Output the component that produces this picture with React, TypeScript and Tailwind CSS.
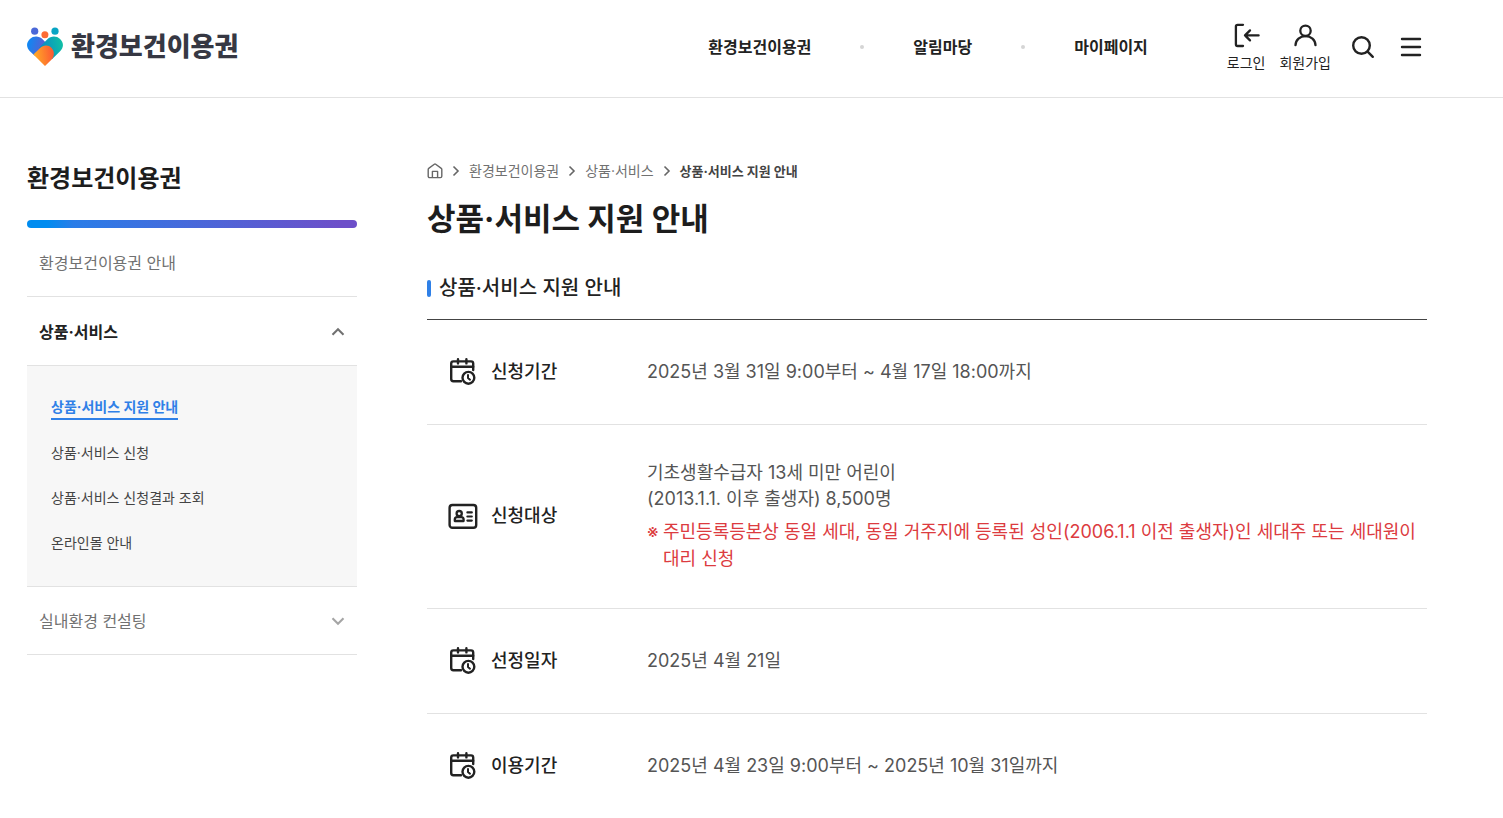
import React, { useState } from "react";

type IconProps = { className?: string };

const Logo: React.FC<IconProps> = ({ className }) => (
  <svg className={className} width="36" height="40" viewBox="0 0 36 40" fill="none" aria-hidden="true">
    <defs>
      <linearGradient id="logo-blue" x1="0" y1="16" x2="17" y2="20" gradientUnits="userSpaceOnUse">
        <stop stopColor="#0a8af5" />
        <stop offset="1" stopColor="#5a5fd2" />
      </linearGradient>
      <linearGradient id="logo-green" x1="16" y1="22" x2="36" y2="18" gradientUnits="userSpaceOnUse">
        <stop stopColor="#0a8fc4" />
        <stop offset="1" stopColor="#10bfa5" />
      </linearGradient>
      <linearGradient id="logo-orange" x1="8" y1="28" x2="26" y2="26" gradientUnits="userSpaceOnUse">
        <stop stopColor="#ffa726" />
        <stop offset="1" stopColor="#fd5a33" />
      </linearGradient>
    </defs>
    <circle cx="7.7" cy="4.2" r="3.6" fill="#4a68d8" />
    <circle cx="28" cy="4.2" r="3.6" fill="#08a5c4" />
    <circle cx="17.9" cy="7.8" r="3.5" fill="#fd6a33" />
    <path d="M18 14.8L15.6 12.3C12 8.7 6.4 8.7 2.9 12C-.9 15.6-.9 20.6 2.9 24.2L7.4 28.6L20 24Z" fill="url(#logo-blue)" />
    <path d="M12 20.8L20.4 12.3C24 8.7 29.6 8.7 33.1 12C36.9 15.6 36.9 20.6 33.1 24.2L25.2 31.9Z" fill="url(#logo-green)" />
    <path d="M6.4 27.6L12.9 21.3C16.3 17.8 21.4 17.8 24.4 20.8C27.4 23.8 27.5 28.2 25.4 31.7L18 39Z" fill="url(#logo-orange)" />
  </svg>
);

const LoginIcon = () => (
  <svg width="28" height="28" viewBox="0 0 28 28" fill="none" stroke="#222" strokeWidth="2.3" strokeLinecap="round" strokeLinejoin="round" aria-hidden="true">
    <path d="M11 3.8H5.6C4.7 3.8 3.9 4.6 3.9 5.5V23.3C3.9 24.2 4.7 25 5.6 25H11" />
    <path d="M26.6 14.4H13M18 9.4L13 14.4L18 19.4" />
  </svg>
);

const UserIcon = () => (
  <svg width="28" height="28" viewBox="0 0 28 28" fill="none" stroke="#222" strokeWidth="2.3" strokeLinecap="round" aria-hidden="true">
    <circle cx="14.5" cy="9.8" r="5.2" />
    <path d="M4.5 24.2C4.7 18.8 9 15.1 14.5 15.1S24.3 18.8 24.5 24.2" />
  </svg>
);

const SearchIcon = () => (
  <svg width="32" height="32" viewBox="0 0 32 32" fill="none" stroke="#222" strokeWidth="2.4" strokeLinecap="round" aria-hidden="true">
    <circle cx="14.5" cy="14.5" r="8.3" />
    <path d="M20.6 20.6L25.8 25.8" />
  </svg>
);

const MenuIcon = () => (
  <svg width="32" height="32" viewBox="0 0 32 32" stroke="#222" strokeWidth="2.4" strokeLinecap="round" aria-hidden="true">
    <path d="M7 8H25M7 16H25M7 24H25" />
  </svg>
);

const HomeIcon = () => (
  <svg width="16" height="16" viewBox="0 0 16 16" fill="none" stroke="#666" strokeWidth="1.4" strokeLinejoin="round" aria-hidden="true">
    <path d="M1.2 6.4C1.2 6 1.4 5.6 1.7 5.4L7.3 1.2C7.7.9 8.3.9 8.7 1.2L14.3 5.4C14.6 5.6 14.8 6 14.8 6.4V13.2C14.8 14 14.2 14.6 13.4 14.6H2.6C1.8 14.6 1.2 14 1.2 13.2Z" />
    <path d="M5.4 14.4V8.4H10.6V14.4" />
  </svg>
);

const Chevron: React.FC<IconProps> = ({ className }) => (
  <svg className={className} width="14" height="14" viewBox="0 0 14 14" fill="none" stroke="currentColor" strokeWidth="2.1" aria-hidden="true">
    <path d="M1.5 4.2L7 9.7L12.5 4.2" />
  </svg>
);

const CrumbArrow = () => (
  <svg width="8" height="12" viewBox="0 0 8 12" fill="none" stroke="#666" strokeWidth="1.6" aria-hidden="true">
    <path d="M1.5 1.5L6 6L1.5 10.5" />
  </svg>
);

const CalendarIcon = () => (
  <svg width="32" height="32" viewBox="0 0 32 32" fill="none" stroke="#222" strokeWidth="2.4" strokeLinecap="round" strokeLinejoin="round" aria-hidden="true">
    <path d="M14 26.2H6.4C5 26.2 4.2 25.4 4.2 24V8.6C4.2 7.2 5 6.4 6.4 6.4H24C25.4 6.4 26.2 7.2 26.2 8.6V15" />
    <path d="M4.2 11.8H26.2M11 4.2V8.4M19.4 4.2V8.4" />
    <circle cx="21.4" cy="22.8" r="5.9" />
    <path d="M21 20V23L23 24.7" strokeWidth="2" />
  </svg>
);

const IdCardIcon = () => (
  <svg width="32" height="32" viewBox="0 0 32 32" fill="none" stroke="#222" strokeWidth="2.4" strokeLinecap="round" strokeLinejoin="round" aria-hidden="true">
    <rect x="2.6" y="5" width="26.6" height="22.8" rx="2.8" />
    <circle cx="12.2" cy="13.6" r="2.6" strokeWidth="2.3" />
    <path d="M7.8 21V19.6C7.8 18.2 8.9 17.2 10.2 17.2H14.2C15.5 17.2 16.6 18.2 16.6 19.6V21Z" strokeWidth="2.3" />
    <path d="M20.4 12.4H24.8M20.4 16.5H24.8M20.4 20.6H24.8" strokeWidth="2.2" />
  </svg>
);

const navItems = ["환경보건이용권", "알림마당", "마이페이지"];

const subMenu = [
  "상품·서비스 지원 안내",
  "상품·서비스 신청",
  "상품·서비스 신청결과 조회",
  "온라인몰 안내",
];

const crumbs = ["환경보건이용권", "상품·서비스"];

const rows = [
  {
    icon: <CalendarIcon />,
    label: "신청기간",
    lines: ["2025년 3월 31일 9:00부터 ~ 4월 17일 18:00까지"],
  },
  {
    icon: <IdCardIcon />,
    label: "신청대상",
    lines: ["기초생활수급자 13세 미만 어린이", "(2013.1.1. 이후 출생자) 8,500명"],
    note: "주민등록등본상 동일 세대, 동일 거주지에 등록된 성인(2006.1.1 이전 출생자)인 세대주 또는 세대원이 대리 신청",
  },
  { icon: <CalendarIcon />, label: "선정일자", lines: ["2025년 4월 21일"] },
  {
    icon: <CalendarIcon />,
    label: "이용기간",
    lines: ["2025년 4월 23일 9:00부터 ~ 2025년 10월 31일까지"],
  },
];

const Header = () => (
  <header className="flex h-[98px] items-center justify-between border-b border-[#e2e2e2] pr-[76px] pb-1 pl-[27px]">
    <a href="#" className="flex items-center gap-2">
      <Logo />
      <span className="text-[26px] leading-9 font-black text-[#363843]">환경보건이용권</span>
    </a>

    <div className="flex items-center">
      <nav className="mr-[79px] flex items-center">
        {navItems.map((item, i) => (
          <React.Fragment key={item}>
            {i > 0 && <span className="mx-[49px] size-1 rounded-full bg-[#d5d5d5]" />}
            <a href="#" className="text-base font-bold text-[#222] hover:text-[#2f80e7]">
              {item}
            </a>
          </React.Fragment>
        ))}
      </nav>

      <div className="flex items-center gap-4 text-[#222]">
        <div className="flex gap-[14px] pt-1 text-[14px] leading-7">
          <a href="#" className="flex flex-col items-center">
            <LoginIcon />
            로그인
          </a>
          <a href="#" className="flex flex-col items-center">
            <UserIcon />
            회원가입
          </a>
        </div>
        <button type="button" aria-label="검색">
          <SearchIcon />
        </button>
        <button type="button" aria-label="전체메뉴">
          <MenuIcon />
        </button>
      </div>
    </div>
  </header>
);

const SideMenu = () => {
  const [open, setOpen] = useState(true);

  return (
    <aside className="w-[330px] shrink-0">
      <h2 className="text-2xl leading-[34px] font-bold text-[#1d1d1d]">환경보건이용권</h2>
      <div className="mt-6 h-2 rounded-full bg-[linear-gradient(90deg,#008cf0_0%,#008cf0_6%,#2a7de8_14%,#6d4fc9_95%)]" />

      <ul className="text-base text-[#717171]">
        <li className="border-b border-[#e2e2e2]">
          <a href="#" className="flex h-[68px] items-center px-3 pt-0.5">
            환경보건이용권 안내
          </a>
        </li>
        <li className="border-b border-[#e2e2e2]">
          <button
            type="button"
            aria-expanded={open}
            onClick={() => setOpen(!open)}
            className="flex h-[68px] w-full items-center justify-between px-3 pt-0.5 font-bold text-[#222]"
          >
            상품·서비스
            <Chevron className={open ? "rotate-180 text-[#717171]" : "text-[#a5a5a5]"} />
          </button>
          {open && (
            <ul className="flex flex-col gap-[21px] border-t border-[#e2e2e2] bg-[#f7f7f7] px-6 pt-[30px] pb-[31px] text-[14px] leading-6 text-[#444]">
              {subMenu.map((item, i) => (
                <li key={item} className="flex">
                  <a
                    href="#"
                    className={i === 0 ? "border-b-2 border-[#2f80e7] leading-[22px] font-bold text-[#2f80e7]" : ""}
                  >
                    {item}
                  </a>
                </li>
              ))}
            </ul>
          )}
        </li>
        <li className="border-b border-[#e2e2e2]">
          <button type="button" className="flex h-[67px] w-full items-center justify-between px-3">
            실내환경 컨설팅
            <Chevron className="text-[#a5a5a5]" />
          </button>
        </li>
      </ul>
    </aside>
  );
};

const Breadcrumb = () => (
  <nav className="flex items-center gap-[9px] text-[14px] leading-[18px] text-[#717171]">
    <a href="#" aria-label="홈">
      <HomeIcon />
    </a>
    {crumbs.map((crumb) => (
      <React.Fragment key={crumb}>
        <CrumbArrow />
        <a href="#">{crumb}</a>
      </React.Fragment>
    ))}
    <CrumbArrow />
    <span className="text-[13px] font-bold text-[#444]">상품·서비스 지원 안내</span>
  </nav>
);

export default function App() {
  return (
    <div className="min-h-screen bg-white font-['Inter','Noto_Sans_CJK_KR',sans-serif] break-keep">
      <Header />

      <div className="flex gap-[70px] pt-16 pr-[76px] pl-[27px]">
        <SideMenu />

        <main className="min-w-0 flex-1">
          <Breadcrumb />
          <h1 className="mt-4 text-[31px] leading-[46px] font-bold text-[#1d1d1d]">상품·서비스 지원 안내</h1>

          <section>
            <h3 className="mt-[31px] flex items-center gap-2 text-xl leading-[30px] font-medium text-[#222]">
              <span className="h-[17px] w-1 rounded-sm bg-[#2f80e7]" />
              상품·서비스 지원 안내
            </h3>

            <table className="mt-4 w-full border-t border-[#444] text-left text-lg leading-[27px] text-[#555]">
              <tbody>
                {rows.map((row) => (
                  <tr key={row.label} className="h-[105px] border-b border-[#e2e2e2]">
                    <th scope="row" className="w-[220px] pb-0.5 pl-5 font-medium text-[#222]">
                      <span className="flex items-center gap-3">
                        {row.icon}
                        {row.label}
                      </span>
                    </th>
                    <td className="pt-[35px] pb-9">
                      {row.lines.map((line) => (
                        <p key={line} className="leading-[26px]">
                          {line}
                        </p>
                      ))}
                      {row.note && (
                        <p className="mt-[6px] flex text-[#dc3b40]">
                          <span className="w-4 shrink-0">※</span>
                          <span>{row.note}</span>
                        </p>
                      )}
                    </td>
                  </tr>
                ))}
              </tbody>
            </table>
          </section>
        </main>
      </div>
    </div>
  );
}
